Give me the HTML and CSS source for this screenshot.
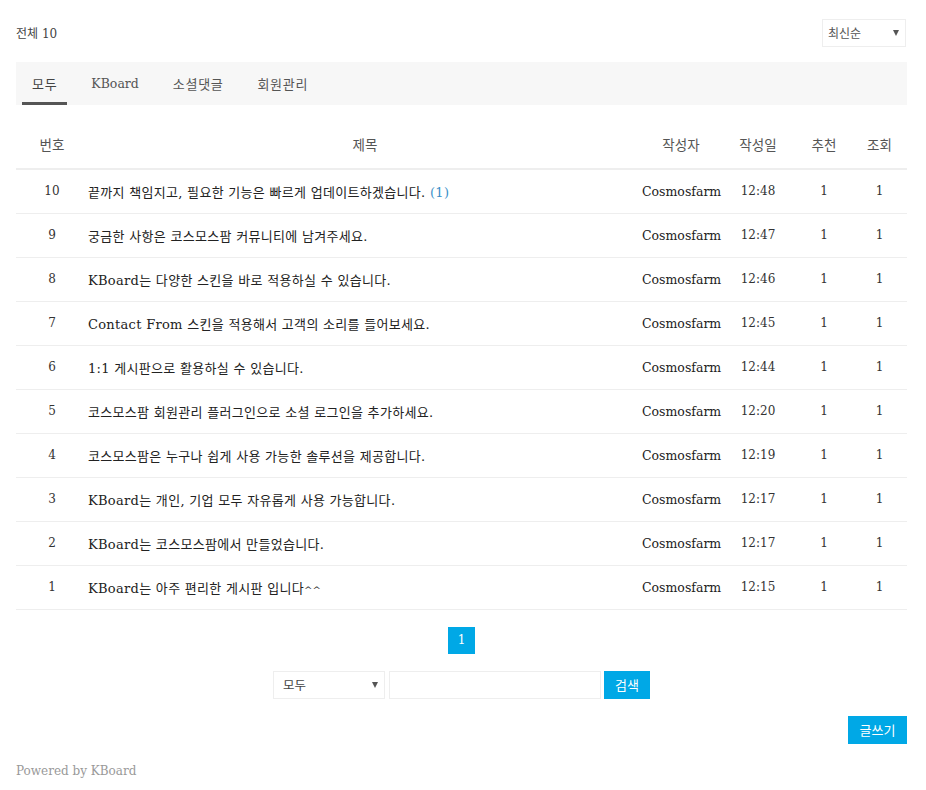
FILE: index.html
```html
<!DOCTYPE html>
<html lang="ko">
<head>
<meta charset="utf-8">
<link rel="stylesheet" href="styles.css">
</head>
<body>
<div class="board">
  <div class="top">
    <div class="total">전체 10</div>
    <div class="sort">최신순<span class="caret"></span></div>
  </div>
  <div class="tabs">
    <a class="tab ko active">모두</a>
    <a class="tab">KBoard</a>
    <a class="tab ko">소셜댓글</a>
    <a class="tab ko">회원관리</a>
  </div>
  <table class="list">
    <colgroup>
      <col class="c-num"><col><col class="c-user"><col class="c-date"><col class="c-vote"><col class="c-view">
    </colgroup>
    <thead>
      <tr><th>번호</th><th>제목</th><th>작성자</th><th>작성일</th><th>추천</th><th>조회</th></tr>
    </thead>
    <tbody>
      <tr><td class="n">10</td><td class="title">끝까지 책임지고, 필요한 기능은 빠르게 업데이트하겠습니다. <span class="cmt">(1)</span></td><td>Cosmosfarm</td><td class="n">12:48</td><td class="n">1</td><td class="n">1</td></tr>
      <tr><td class="n">9</td><td class="title">궁금한 사항은 코스모스팜 커뮤니티에 남겨주세요.</td><td>Cosmosfarm</td><td class="n">12:47</td><td class="n">1</td><td class="n">1</td></tr>
      <tr><td class="n">8</td><td class="title">KBoard는 다양한 스킨을 바로 적용하실 수 있습니다.</td><td>Cosmosfarm</td><td class="n">12:46</td><td class="n">1</td><td class="n">1</td></tr>
      <tr><td class="n">7</td><td class="title">Contact From 스킨을 적용해서 고객의 소리를 들어보세요.</td><td>Cosmosfarm</td><td class="n">12:45</td><td class="n">1</td><td class="n">1</td></tr>
      <tr><td class="n">6</td><td class="title">1:1 게시판으로 활용하실 수 있습니다.</td><td>Cosmosfarm</td><td class="n">12:44</td><td class="n">1</td><td class="n">1</td></tr>
      <tr><td class="n">5</td><td class="title">코스모스팜 회원관리 플러그인으로 소셜 로그인을 추가하세요.</td><td>Cosmosfarm</td><td class="n">12:20</td><td class="n">1</td><td class="n">1</td></tr>
      <tr><td class="n">4</td><td class="title">코스모스팜은 누구나 쉽게 사용 가능한 솔루션을 제공합니다.</td><td>Cosmosfarm</td><td class="n">12:19</td><td class="n">1</td><td class="n">1</td></tr>
      <tr><td class="n">3</td><td class="title">KBoard는 개인, 기업 모두 자유롭게 사용 가능합니다.</td><td>Cosmosfarm</td><td class="n">12:17</td><td class="n">1</td><td class="n">1</td></tr>
      <tr><td class="n">2</td><td class="title">KBoard는 코스모스팜에서 만들었습니다.</td><td>Cosmosfarm</td><td class="n">12:17</td><td class="n">1</td><td class="n">1</td></tr>
      <tr><td class="n">1</td><td class="title">KBoard는 아주 편리한 게시판 입니다<span class="hat">^^</span></td><td>Cosmosfarm</td><td class="n">12:15</td><td class="n">1</td><td class="n">1</td></tr>
    </tbody>
  </table>
  <div class="pagination"><span class="page">1</span></div>
  <div class="search">
    <div class="s-select">모두<span class="caret"></span></div>
    <div class="s-input"></div>
    <button class="btn search-btn">검색</button>
  </div>
  <div class="actions"><button class="btn write">글쓰기</button></div>
  <div class="powered">Powered by KBoard</div>
</div>
</body>
</html>
```
FILE: styles.css
```css
* { box-sizing: border-box; }
body {
  margin: 0;
  background: #fff;
  font-family: "DejaVu Serif", "Noto Sans CJK KR", serif;
  font-size: 12px;
  color: #222;
}
.board {
  width: 891px;
  margin-left: 16px;
}
.top {
  display: flex;
  justify-content: space-between;
  align-items: center;
  height: 62px;
  padding-top: 3px;
}
.total {
  color: #444;
  font-size: 12px;
}
.sort {
  width: 84px;
  height: 28px;
  border: 1px solid #eee;
  display: flex;
  align-items: center;
  justify-content: space-between;
  padding: 0 6px 0 5px;
  color: #555;
  font-family: "Noto Sans CJK KR", sans-serif;
  font-size: 12px;
  margin-right: 1px;
}
.caret {
  width: 0;
  height: 0;
  border-left: 3.5px solid transparent;
  border-right: 3.5px solid transparent;
  border-top: 6px solid #555;
}
.tabs {
  display: flex;
  height: 43px;
  background: #f7f7f7;
  padding-left: 6px;
}
.tab {
  display: flex;
  align-items: center;
  padding: 3px 10px 0;
  margin-right: 14px;
  color: #555;
  font-size: 12.5px;
  border-bottom: 3px solid transparent;
}
.tab.ko {
  font-size: 13px;
  letter-spacing: 0.7px;
}
.tab.active {
  border-bottom-color: #555;
  color: #444;
}
.list {
  width: 100%;
  border-collapse: collapse;
  table-layout: fixed;
  margin-top: 16px;
}
.c-num { width: 72px; }
.c-user { width: 78px; }
.c-date { width: 76px; }
.c-vote { width: 56px; }
.c-view { width: 55px; }
.list th {
  height: 48px;
  font-weight: normal;
  color: #555;
  font-size: 13.5px;
  font-family: "Noto Sans CJK KR", sans-serif;
  border-bottom: 2px solid #eee;
  padding: 0 0 2px;
}
.list td {
  height: 44px;
  border-bottom: 1px solid #eee;
  text-align: center;
  padding: 0;
  font-size: 12.5px;
  font-weight: normal;
  color: #222;
  white-space: nowrap;
}
.list td.n {
  font-size: 12px;
  color: #333;
}
.list td.title {
  text-align: left;
  font-size: 13px;
  letter-spacing: 0.3px;
}
.hat {
  font-size: 10px;
  letter-spacing: 0;
}
.cmt { color: #3a8fc8; }
.pagination {
  display: flex;
  justify-content: center;
  margin-top: 17px;
}
.page {
  width: 27px;
  height: 27px;
  background: #00a8e6;
  color: #fff;
  display: flex;
  align-items: center;
  justify-content: center;
  font-size: 12px;
}
.search {
  display: flex;
  justify-content: center;
  margin-top: 17px;
}
.s-select {
  width: 112px;
  height: 28px;
  border: 1px solid #eee;
  display: flex;
  align-items: center;
  justify-content: space-between;
  padding: 0 6px 0 9px;
  color: #444;
  font-family: "Noto Sans CJK KR", sans-serif;
  font-size: 12.5px;
  margin-right: 4px;
}
.s-input {
  width: 212px;
  height: 28px;
  border: 1px solid #eee;
  margin-right: 3px;
}
.btn {
  height: 28px;
  border: 0;
  background: #00a8e6;
  color: #fff;
  font-family: "Noto Sans CJK KR", sans-serif;
  font-size: 13px;
  padding: 0;
}
.search-btn { width: 46px; }
.actions {
  display: flex;
  justify-content: flex-end;
  margin-top: 17px;
}
.write { width: 59px; }
.powered {
  margin-top: 20px;
  color: #999;
  font-size: 12px;
}
```
